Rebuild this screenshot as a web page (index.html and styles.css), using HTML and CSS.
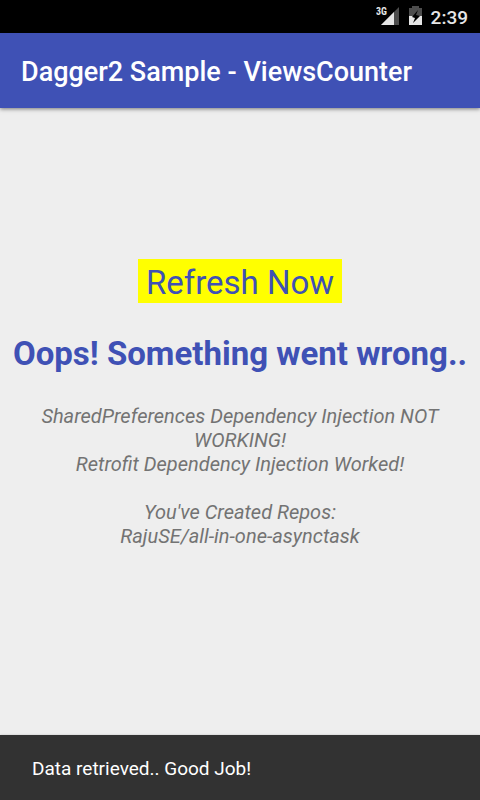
FILE: index.html
```html
<!DOCTYPE html>
<html lang="en">
<head>
<meta charset="utf-8">
<meta name="viewport" content="width=device-width, initial-scale=1">
<title>Dagger2 Sample - ViewsCounter</title>
<link rel="stylesheet" href="styles.css">
</head>
<body>
<div class="status-bar">
  <svg class="signal" width="24" height="20" viewBox="0 0 24 20" role="img" aria-label="3G signal">
    <path d="M23 1V19H5z" fill="#4d4d4d"/>
    <path d="M18 6V19H5z" fill="#e6e6e6"/>
    <text x="0" y="9" class="network">3G</text>
  </svg>
  <svg class="battery" width="13" height="20" viewBox="0 0 13 20" role="img" aria-label="Battery charging">
    <path d="M3 0H10V2H13V10H0V2H3z" fill="#4d4d4d"/>
    <path d="M0 10H13V19H0z" fill="#e6e6e6"/>
    <path d="M9 4L3 11L6 12L4 17L11 10L7 9z" fill="#000"/>
  </svg>
  <time class="clock">2:39</time>
</div>
<header class="app-bar"><h1 class="app-title">Dagger2 Sample - ViewsCounter</h1></header>
<main class="content">
  <button class="refresh" type="button">Refresh Now</button>
  <h2 class="headline">Oops! Something went wrong..</h2>
  <p class="details">SharedPreferences Dependency Injection NOT WORKING!<br>Retrofit Dependency Injection Worked!<br><br>You've Created Repos:<br>RajuSE/all-in-one-asynctask</p>
</main>
<div class="snackbar" role="status">Data retrieved.. Good Job!</div>
</body>
</html>
```
FILE: styles.css
```css
* { box-sizing: border-box; }
body {
  margin: 0;
  min-height: 100vh;
  display: flex;
  flex-direction: column;
  background: #eee;
  font-family: Roboto, "Liberation Sans", sans-serif;
}
.status-bar {
  padding: 6px 12px 3px;
  display: flex;
  align-items: flex-start;
  justify-content: flex-end;
  gap: 9px;
  background: #000;
  color: #e6e6e6;
}
.network { font-family: "Roboto Condensed", Roboto, sans-serif; font-size: 10px; font-weight: 700; fill: #e6e6e6; }
.clock { font-size: 19px; font-weight: 500; line-height: 24px; }
.app-bar {
  padding: 23px 21px 20px;
  background: #3f51b5;
  color: #fff;
  box-shadow: 0 1px 4px rgba(0, 0, 0, 0.5);
}
.app-title { margin: 0; font-size: 27px; line-height: 32px; font-weight: 500; }
.content {
  flex: 1;
  padding: 0 12px 36px;
  display: flex;
  flex-direction: column;
  align-items: center;
  justify-content: center;
  text-align: center;
}
.refresh {
  margin: 0;
  padding: 4px 8px 0;
  border: 0;
  border-radius: 0;
  background: #ff0;
  color: #3f51b5;
  font: 400 33px/40px Roboto, "Liberation Sans", sans-serif;
}
.headline {
  margin: 31px 0 30px;
  color: #3f51b5;
  font-size: 33px;
  line-height: 40px;
  font-weight: 700;
  white-space: nowrap;
}
.details {
  margin: 0;
  padding: 0 20px;
  color: #737373;
  font-size: 20px;
  line-height: 24px;
  font-style: italic;
}
.snackbar {
  padding: 22px 32px 20px;
  background: #323232;
  color: #fff;
  font-size: 19px;
  line-height: 23px;
  box-shadow: 0 0 2px rgba(0, 0, 0, 0.2);
}
```
